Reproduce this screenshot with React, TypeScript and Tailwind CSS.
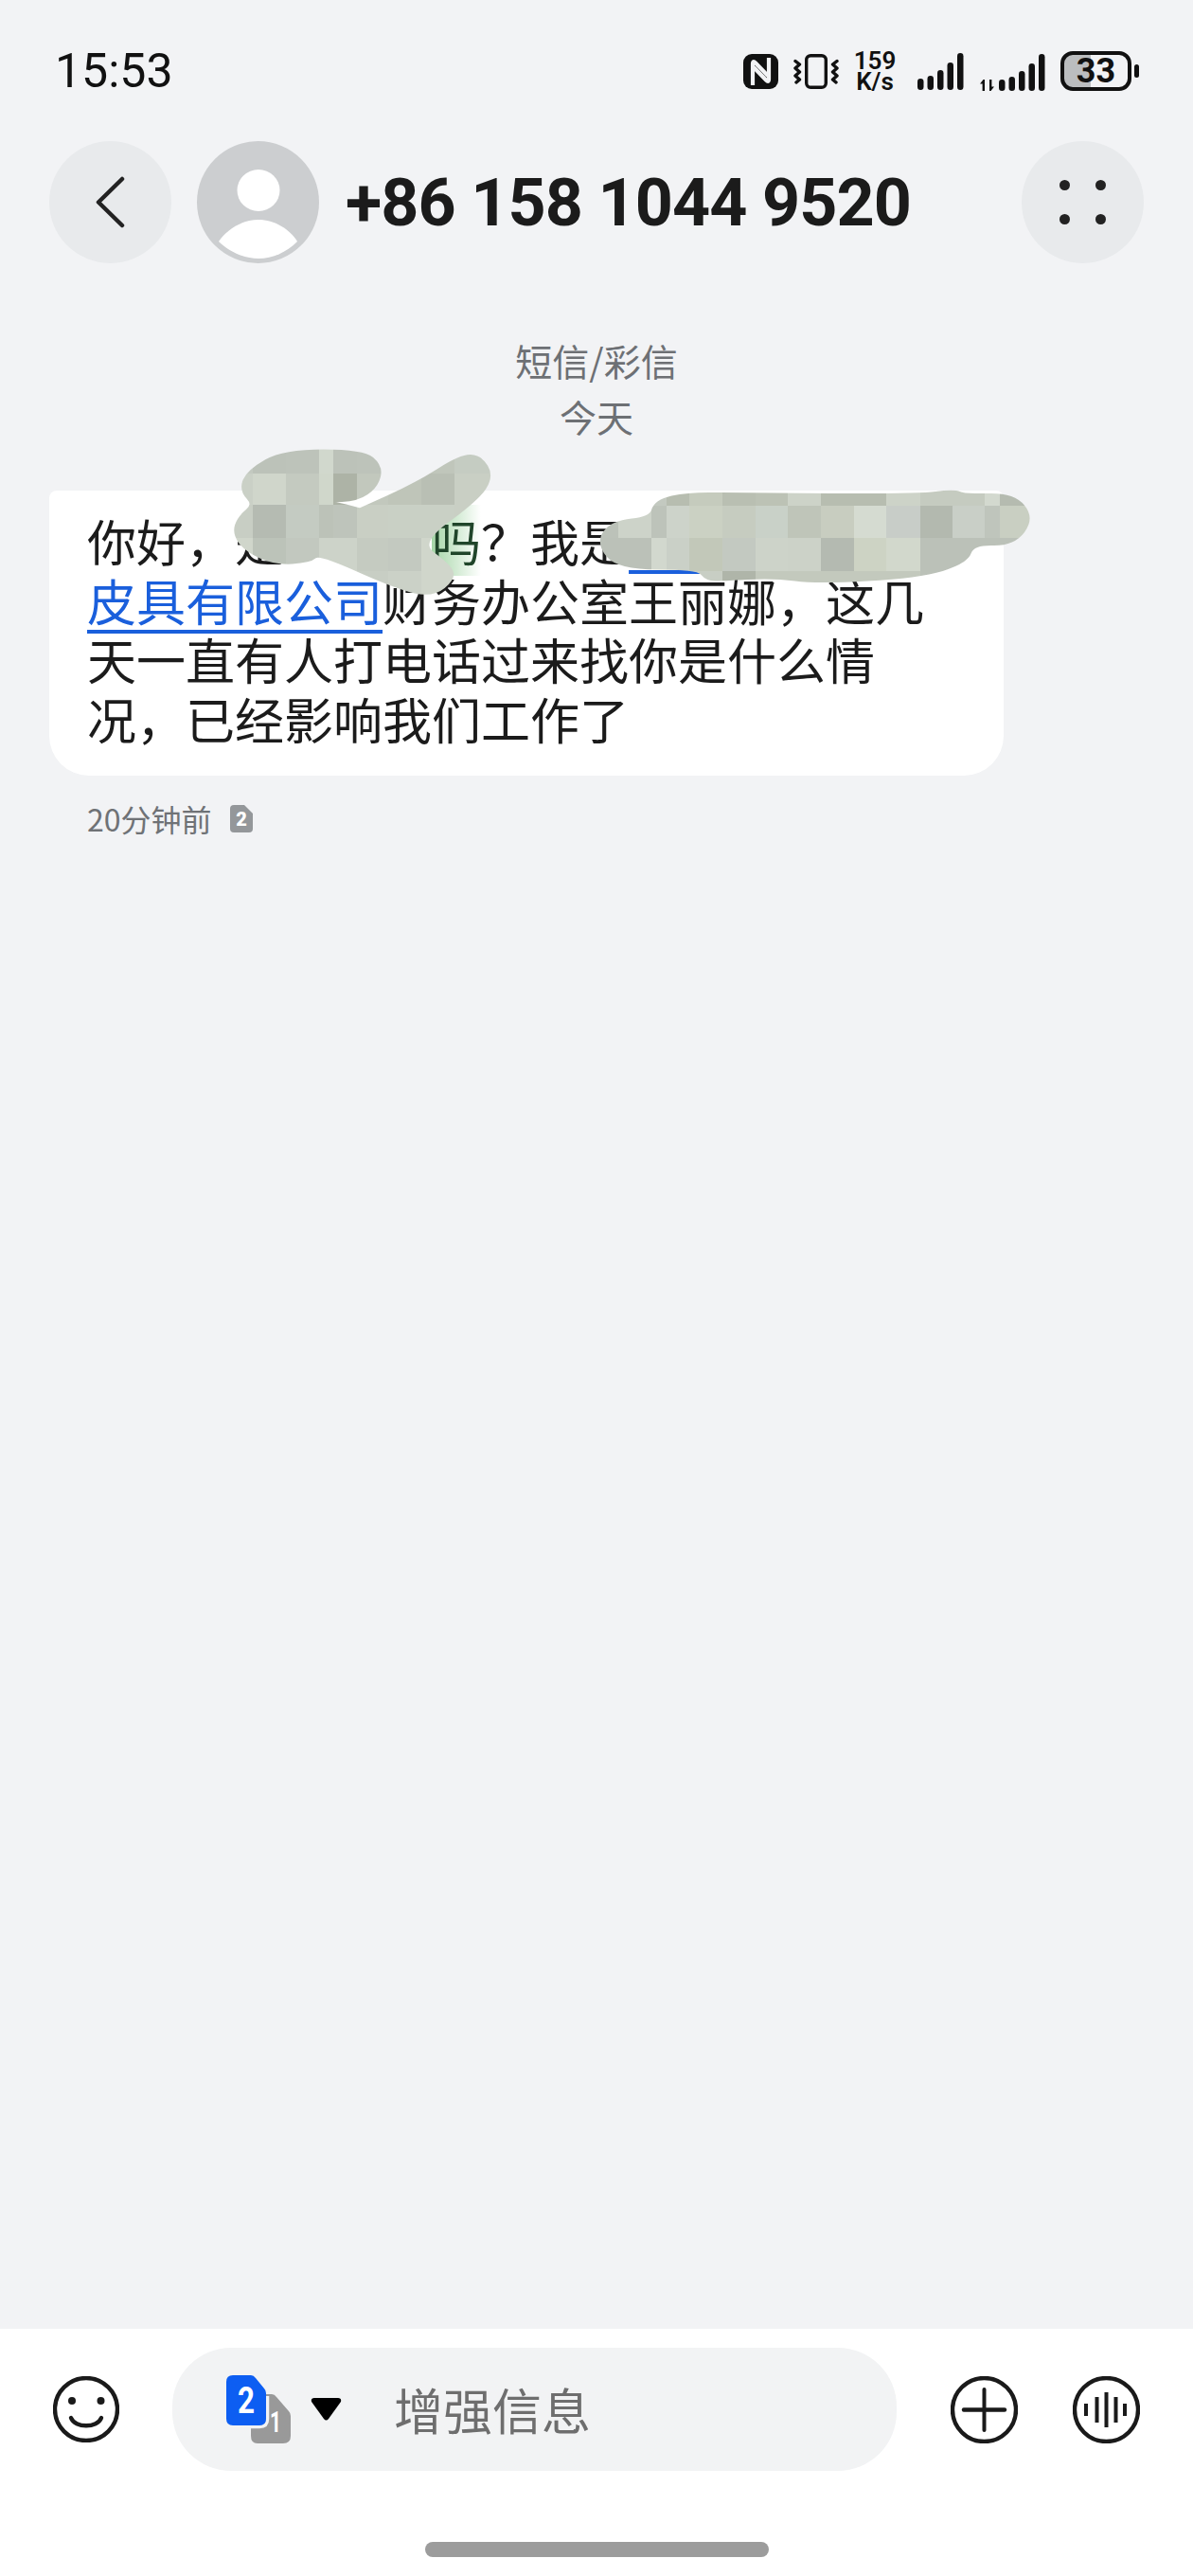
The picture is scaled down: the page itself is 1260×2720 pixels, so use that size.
import React from "react";

const cjk = "font-['Noto_Sans_CJK_SC','Noto_Sans',sans-serif]";
const latin = "font-['Roboto','Noto_Sans_CJK_SC',sans-serif]";

// redaction smudge drawn over the message: outline points + mosaic cells
type Cell = [number, number, number, number, string];

const smudgeOne: [number, number][] = [
  [255, 517], [263, 498], [300, 477], [383, 477], [402, 493], [397, 513], [377, 527], [345, 528],
  [310, 527], [310, 527], [350, 531], [380, 539], [380, 539], [440, 512], [487, 482], [507, 483], [519, 503], [503, 527],
  [440, 573], [473, 597], [479, 610], [457, 628], [420, 620], [337, 583], [327, 592], [290, 594],
  [260, 580], [248, 563], [253, 547], [270, 533],
];

const smudgeTwo: [number, number][] = [
  [632, 573], [647, 552], [688, 548], [693, 530], [727, 522], [783, 523], [970, 524], [1007, 519],
  [1020, 524], [1070, 523], [1090, 547], [1070, 574], [1027, 573], [1020, 593], [970, 608], [863, 614],
  [817, 608], [763, 611], [747, 611], [737, 599], [653, 599],
];

function row(y: number, h: number, xs: number[], colors: string[]): Cell[] {
  return colors.map((c, i) => [xs[i], y, xs[i + 1] - xs[i], h, c] as Cell);
}

const xsOne = [240, 267, 302, 337, 352, 377, 410, 445, 480, 530];
const xsTwo = [625, 653, 688, 704, 728, 763, 798, 832, 867, 902, 936, 972, 1006, 1040, 1056, 1100];

const cellsOne: Cell[] = [
  ...row(470, 30, xsOne, ["#c3c9c0", "#bcc2b9", "#bdc3ba", "#d1d8cd", "#bcc2b9", "#bdc3ba", "#c0c6bb", "#c0c6bb", "#c5ccc2"]),
  ...row(500, 33, xsOne, ["#cad0c6", "#d0d6cb", "#c4cac0", "#d0d7cb", "#adb3a6", "#c2c8bd", "#bfc5b9", "#b9bfb4", "#c9cfc4"]),
  ...row(533, 35, xsOne, ["#c8cec4", "#b5bbb2", "#c4cbc2", "#bcc2b8", "#bec4bb", "#c9cfc4", "#c9d0c5", "#c9d0c5", "#c9cfc4"]),
  ...row(568, 35, xsOne, ["#d0d6cb", "#bcc3b9", "#c2c8bf", "#cdd3c9", "#cdd3c9", "#c5cbc1", "#c3c9c0", "#d0d6cb", "#d0d6cb"]),
  ...row(603, 37, xsOne, ["#d0d6cb", "#bcc3b9", "#c2c8bf", "#cdd3c9", "#cdd3c9", "#c8cec4", "#cbd1c7", "#d0d6cb", "#d0d6cb"]),
];

const cellsTwo: Cell[] = [
  ...row(515, 19, xsTwo, ["#bcc2b9", "#cdd3c9", "#c3c9c0", "#b7bdb0", "#c5cbbd", "#b9bfb2", "#bcc2b5", "#cdd3c8", "#b7bdb0", "#b7bdb0", "#cdd3c8", "#c5cbc0", "#c5cbc0", "#d3d9cf", "#b5bbb0"]),
  ...row(534, 34, xsTwo, ["#bcc2b9", "#cdd3c9", "#bdc3ba", "#cdd3ca", "#cbd1c3", "#c6ccc0", "#c9d1c8", "#bfc5b9", "#c8cdc0", "#d5dbd1", "#c8cdc8", "#b3b9af", "#c9cfc7", "#bfc5bc", "#c9cfc2"]),
  ...row(568, 35, xsTwo, ["#bbc1b8", "#bbc1b8", "#d2d8ce", "#cad0c7", "#c2c8b9", "#c3c9c1", "#cdd3c9", "#ccd2c8", "#b4bab1", "#cdd3c4", "#d2d8cc", "#bbc1b8", "#bbc1b8", "#bbc1b8", "#bbc1b8"]),
  ...row(603, 15, xsTwo, ["#bbc1b8", "#bbc1b8", "#d2d8ce", "#cad0c7", "#c8cec4", "#afb5a9", "#c3c9bd", "#c3c9bd", "#c3c9bd", "#c3c9bd", "#c3c9bd", "#bbc1b8", "#bbc1b8", "#bbc1b8", "#bbc1b8"]),
];

// closed smooth path through the midpoints of a point list
function smoothPath(pts: [number, number][]) {
  const mid = (a: [number, number], b: [number, number]) => [(a[0] + b[0]) / 2, (a[1] + b[1]) / 2];
  const start = mid(pts[pts.length - 1], pts[0]);
  let d = `M${start[0]} ${start[1]}`;
  pts.forEach((p, i) => {
    const m = mid(p, pts[(i + 1) % pts.length]);
    d += `Q${p[0]} ${p[1]} ${m[0]} ${m[1]}`;
  });
  return d + "Z";
}

function Smudges() {
  return (
    <svg className="pointer-events-none absolute left-0 top-0" width="1260" height="700" viewBox="0 0 1260 700">
      <defs>
        <mask id="smudge-one" maskUnits="userSpaceOnUse" x="0" y="0" width="1260" height="700">
          <path d={smoothPath(smudgeOne)} fill="#fff" stroke="#fff" strokeWidth="5" strokeLinejoin="round" />
        </mask>
        <mask id="smudge-two" maskUnits="userSpaceOnUse" x="0" y="0" width="1260" height="700">
          <path d={smoothPath(smudgeTwo)} fill="#fff" stroke="#fff" strokeWidth="5" strokeLinejoin="round" />
        </mask>
      </defs>
      <g mask="url(#smudge-one)">
        {cellsOne.map(([x, y, w, h, c], i) => (
          <rect key={i} x={x} y={y} width={w} height={h} fill={c} />
        ))}
      </g>
      <g mask="url(#smudge-two)">
        {cellsTwo.map(([x, y, w, h, c], i) => (
          <rect key={i} x={x} y={y} width={w} height={h} fill={c} />
        ))}
      </g>
    </svg>
  );
}

function NfcIcon() {
  return (
    <svg width="37" height="37" viewBox="0 0 37 37">
      <rect width="37" height="37" rx="9" fill="#111" />
      <path d="M10 33V10.500Q10 6.500 13 9.500L26 23" fill="none" stroke="#f2f3f5" strokeWidth="4.2" />
      <path d="M27 4V26.500Q27 30.500 24 27.500L11 14" fill="none" stroke="#f2f3f5" strokeWidth="4.2" />
    </svg>
  );
}

function VibrateIcon() {
  return (
    <svg width="48" height="37" viewBox="0 0 48 37" fill="none" stroke="#111" strokeWidth="3.4" strokeLinecap="round" strokeLinejoin="round">
      <rect x="13.7" y="1.7" width="20.6" height="33.6" rx="4.5" />
      <path d="M2 7.5L6.500 11L2 15L6.500 19L2 23L6.500 27L3 30" />
      <path d="M46 7.5L41.500 11L46 15L41.500 19L46 23L41.500 27L45 30" />
    </svg>
  );
}

function Bars() {
  const bars = [
    { x: 0, h: 12 },
    { x: 10.5, h: 15 },
    { x: 21, h: 21 },
    { x: 31.5, h: 29 },
    { x: 42, h: 39 },
  ];
  return (
    <svg width="49" height="39" viewBox="0 0 49 39">
      {bars.map((b) => (
        <rect key={b.x} x={b.x} y={39 - b.h} width="6.5" height={b.h} rx="3.25" fill="#111" />
      ))}
    </svg>
  );
}

function SignalArrows() {
  return (
    <svg width="15" height="12" viewBox="0 0 15 12" fill="#111">
      <path d="M0 4.5L3.5 0H5V12H2.6V4.5Z" />
      <path d="M15 7.5L11.5 12H10V0H12.4V7.5Z" />
    </svg>
  );
}

function StatusBar() {
  return (
    <div className="flex items-center justify-between pl-[58px] pr-[57px] pt-[53px]">
      <span className={`${latin} text-[50px] leading-[40px] text-[#111]`}>15:53</span>
      <div className="flex items-center">
        <NfcIcon />
        <div className="ml-[16px]">
          <VibrateIcon />
        </div>
        <div className={`${latin} ml-[15px] flex w-[46px] flex-col items-center text-[26px] font-semibold leading-[22px] text-[#111]`}>
          <span>159</span>
          <span>K/s</span>
        </div>
        <div className="ml-[22px]">
          <Bars />
        </div>
        <div className="ml-[17px] flex items-end gap-[5px] self-end pb-[1px]">
          <SignalArrows />
          <Bars />
        </div>
        <div className={`${latin} ml-[16px] flex h-[42px] w-[75px] items-center justify-center rounded-[13px] border-[4px] border-[#111] bg-[linear-gradient(90deg,#bbbdbf_42%,transparent_42%)] text-[36px] font-bold leading-none text-[#111]`}>
          33
        </div>
        <div className="ml-[3px] h-[14px] w-[5px] rounded-full bg-[#111]" />
      </div>
    </div>
  );
}

function Header() {
  return (
    <div className="mt-[52px] flex h-[129px] items-center pl-[52px] pr-[52px]">
      <div className="flex size-[129px] items-center justify-center rounded-full bg-[#e8eaec]">
        <svg width="32" height="56" viewBox="0 0 32 56" fill="none" stroke="#222" strokeWidth="4.5" strokeLinecap="round" strokeLinejoin="round">
          <path d="M28 3L3 27.500L28 52" />
        </svg>
      </div>
      <div className="ml-[27px] size-[129px] overflow-hidden rounded-full bg-[#ccced0]">
        <svg width="129" height="129" viewBox="0 0 129 129" fill="#fff">
          <ellipse cx="65" cy="52" rx="22.5" ry="22" />
          <path d="M23 106C32 93 48 83 65 83C82 83 98 93 106 106C95 117 80 124 65 124C50 124 34 117 23 106Z" />
        </svg>
      </div>
      <h1 className={`${latin} ml-[28px] flex-1 text-[70px] font-bold leading-none tracking-[-0.9px] text-[#1b1b1b]`}>
        +86 158 1044 9520
      </h1>
      <div className="flex size-[129px] items-center justify-center rounded-full bg-[#e8eaec]">
        <div className="grid grid-cols-2 gap-x-[27px] gap-y-[25px]">
          <span className="size-[11px] rounded-full bg-[#222]" />
          <span className="size-[11px] rounded-full bg-[#222]" />
          <span className="size-[11px] rounded-full bg-[#222]" />
          <span className="size-[11px] rounded-full bg-[#222]" />
        </div>
      </div>
    </div>
  );
}

const linkClass =
  "text-[#1a5fdc] underline decoration-[#1a5fdc] decoration-[3.5px] underline-offset-[9px]";

function MessageBubble() {
  return (
    <div className="ml-[52px] mt-[49px] w-[1008px] rounded-b-[42px] rounded-t-[8px] bg-white pb-[29px] pl-[40px] pt-[22px]">
      <div className="whitespace-nowrap text-[52px] leading-[62.5px] text-[#1b1b1b]">
        <div>
          你好，是{"\u3000\u3000\u3000"}
          <span className="bg-[linear-gradient(90deg,#a5d6a7,#ffffff)] text-[#20452a]">吗</span>？我是
          <span className={linkClass}>{"\u3000\u3000\u3000"}</span>
        </div>
        <div>
          <span className={linkClass}>皮具有限公司</span>财务办公室王丽娜，这几
        </div>
        <div>天一直有人打电话过来找你是什么情</div>
        <div>况，已经影响我们工作了</div>
      </div>
    </div>
  );
}

function SimBadge() {
  return (
    <svg width="24" height="29" viewBox="0 0 24 29">
      <path d="M4 0H15L24 9V25Q24 29 20 29H4Q0 29 0 25V4Q0 0 4 0Z" fill="#94979a" />
      <text x="12" y="22" textAnchor="middle" fontFamily="Roboto" fontWeight="900" fontSize="20" fill="#fff">2</text>
    </svg>
  );
}

function Messages() {
  return (
    <div className={`${cjk} flex-1`}>
      <div className="mt-[73px] flex flex-col items-center text-[39px] leading-[59px] text-[#6d7074]">
        <span>短信/彩信</span>
        <span>今天</span>
      </div>
      <MessageBubble />
      <div className="ml-[92px] mt-[28px] flex items-center text-[32px] leading-[34px] text-[#6f7276]">
        <span>20分钟前</span>
        <div className="ml-[19px]">
          <SimBadge />
        </div>
      </div>
    </div>
  );
}

function SimSwitch() {
  return (
    <svg width="68" height="72" viewBox="0 0 68 72">
      <path d="M33 20H48Q51 20 53 23L66 38Q68 40 68 43V64Q68 72 60 72H33Q26 72 26 64V27Q26 20 33 20Z" fill="#999" />
      <text x="52" y="60" textAnchor="middle" fontFamily="Roboto" fontWeight="700" fontSize="32" textLength="12" lengthAdjust="spacingAndGlyphs" fill="#fff">1</text>
      <path d="M43.500 22V46Q43.500 54.500 35 54.500H26" fill="none" stroke="#f2f3f4" strokeWidth="3.5" />
      <path d="M7 0H26Q29 0 31 3L40 14Q42 16 42 19V46Q42 53 35 53H7Q0 53 0 46V7Q0 0 7 0Z" fill="#0d5ef2" />
      <text x="21" y="40" textAnchor="middle" fontFamily="Roboto" fontWeight="700" fontSize="38" textLength="18" lengthAdjust="spacingAndGlyphs" fill="#fff">2</text>
    </svg>
  );
}

function Composer() {
  return (
    <div className={`${cjk} h-[261px] bg-white pt-[20px]`}>
      <div className="flex h-[130px] items-center pl-[56px]">
        <svg width="70" height="70" viewBox="0 0 70 70" fill="none" stroke="#1a1a1a" strokeWidth="4.4" strokeLinecap="round">
          <circle cx="35" cy="35" r="33" />
          <circle cx="20" cy="26" r="4" fill="#1a1a1a" stroke="none" />
          <circle cx="50.5" cy="26" r="4" fill="#1a1a1a" stroke="none" />
          <path d="M19 44C23 55 47 55 51 44" />
        </svg>
        <div className="ml-[56px] flex h-[130px] w-[765px] items-center rounded-[62px] bg-[#f2f3f4] pl-[57px]">
          <SimSwitch />
          <svg className="ml-[21px]" width="33" height="24" viewBox="0 0 33 24" fill="#000">
            <path d="M4 0H29Q33 0 32 4L19 22Q16.500 25 14 22L1 4Q0 0 4 0Z" />
          </svg>
          <span className="ml-[55px] text-[52px] leading-none text-[#6e6e6e]">增强信息</span>
        </div>
        <svg className="ml-[57px]" width="71" height="71" viewBox="0 0 71 71" fill="none" stroke="#1a1a1a" strokeLinecap="round">
          <circle cx="35.500" cy="35.500" r="33.500" strokeWidth="4.400" />
          <path d="M14 35.500H57" strokeWidth="4.400" />
          <path d="M35.500 14V57" strokeWidth="4" />
        </svg>
        <svg className="ml-[58px]" width="71" height="71" viewBox="0 0 71 71" fill="none" stroke="#1a1a1a" strokeLinecap="butt">
          <circle cx="35.500" cy="35.500" r="33.500" strokeWidth="4.400" />
          <path d="M14 29V42M25.500 22V49M35.500 17V54M45.500 22V49M55 29V42" strokeWidth="4" />
        </svg>
      </div>
      <div className="mx-auto mt-[75px] h-[16px] w-[363px] rounded-[8px] bg-[#9c9c9c]" />
    </div>
  );
}

export default function App() {
  return (
    <div lang="zh-CN" className="relative flex h-[2720px] w-[1260px] flex-col overflow-hidden bg-[#f2f3f5]">
      <StatusBar />
      <Header />
      <Messages />
      <Composer />
      <Smudges />
    </div>
  );
}
